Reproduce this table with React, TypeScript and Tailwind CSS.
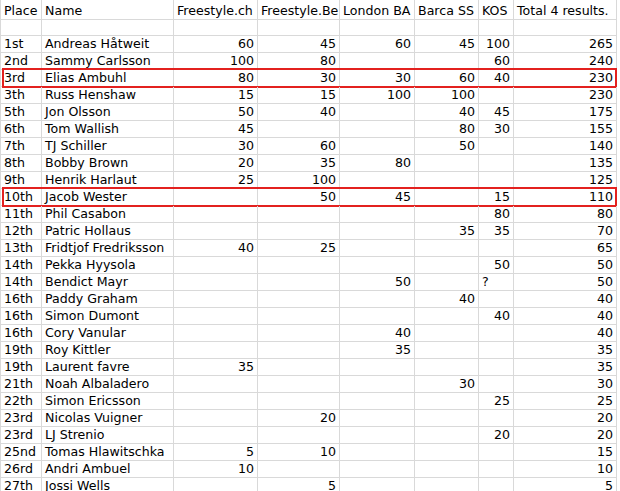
import React from "react";

type Row = [string, string, string, string, string, string, string, string, boolean?];

const rows: Row[] = [
  ["1st", "Andreas Håtweit", "60", "45", "60", "45", "100", "265"],
  ["2nd", "Sammy Carlsson", "100", "80", "", "", "60", "240"],
  ["3rd", "Elias Ambuhl", "80", "30", "30", "60", "40", "230", true],
  ["3th", "Russ Henshaw", "15", "15", "100", "100", "", "230"],
  ["5th", "Jon Olsson", "50", "40", "", "40", "45", "175"],
  ["6th", "Tom Wallish", "45", "", "", "80", "30", "155"],
  ["7th", "TJ Schiller", "30", "60", "", "50", "", "140"],
  ["8th", "Bobby Brown", "20", "35", "80", "", "", "135"],
  ["9th", "Henrik Harlaut", "25", "100", "", "", "", "125"],
  ["10th", "Jacob Wester", "", "50", "45", "", "15", "110", true],
  ["11th", "Phil Casabon", "", "", "", "", "80", "80"],
  ["12th", "Patric Hollaus", "", "", "", "35", "35", "70"],
  ["13th", "Fridtjof Fredriksson", "40", "25", "", "", "", "65"],
  ["14th", "Pekka Hyysola", "", "", "", "", "50", "50"],
  ["14th", "Bendict Mayr", "", "", "50", "", "?", "50"],
  ["16th", "Paddy Graham", "", "", "", "40", "", "40"],
  ["16th", "Simon Dumont", "", "", "", "", "40", "40"],
  ["16th", "Cory Vanular", "", "", "40", "", "", "40"],
  ["19th", "Roy Kittler", "", "", "35", "", "", "35"],
  ["19th", "Laurent favre", "35", "", "", "", "", "35"],
  ["21th", "Noah Albaladero", "", "", "", "30", "", "30"],
  ["22th", "Simon Ericsson", "", "", "", "", "25", "25"],
  ["23rd", "Nicolas Vuigner", "", "20", "", "", "", "20"],
  ["23rd", "LJ Strenio", "", "", "", "", "20", "20"],
  ["25nd", "Tomas Hlawitschka", "5", "10", "", "", "", "15"],
  ["26rd", "Andri Ambuel", "10", "", "", "", "", "10"],
  ["27th", "Jossi Wells", "", "5", "", "", "", "5"],
];

const grid =
  "grid grid-cols-[41px_132px_84px_82px_75px_64px_35px_103px] border-l border-[#d9d9d9]";
const cellBase =
  "flex items-end border-r border-b border-[#d9d9d9] leading-[16px] whitespace-nowrap overflow-hidden";

function Cell({ v, right }: { v: string; right?: boolean }) {
  const isQ = v === "?";
  return (
    <div className={`${cellBase} ${right && !isQ ? "justify-end pr-[3px]" : "justify-start pl-[3px]"}`}>
      {v}
    </div>
  );
}

export default function App() {
  const headers = ["Place", "Name", "Freestyle.ch", "Freestyle.Be", "London BA", "Barca SS", "KOS", "Total 4 results."];
  return (
    <div
      className="w-[620px] h-[491px] overflow-hidden bg-white text-black text-[12.6px]"
      style={{ fontFamily: '"DejaVu Sans", Verdana, sans-serif' }}
    >
      <div className={`${grid} h-[20px]`}>
        {headers.map((h, i) => (
          <div key={i} className={`${cellBase} pl-[3px]`}>
            {h}
          </div>
        ))}
      </div>
      <div className={`${grid} h-[16px]`}>
        {headers.map((_, i) => (
          <div key={i} className={cellBase}></div>
        ))}
      </div>
      {rows.map((r, idx) => (
        <div key={idx} className={`${grid} h-[17px] relative`}>
          {r.slice(0, 8).map((v, i) => (
            <Cell key={i} v={v as string} right={i >= 2} />
          ))}
          {r[8] ? (
            <span className="absolute left-[1px] right-[3px] top-[-2px] bottom-[-1px] border-2 border-[#e3211f] pointer-events-none" />
          ) : null}
        </div>
      ))}
    </div>
  );
}
